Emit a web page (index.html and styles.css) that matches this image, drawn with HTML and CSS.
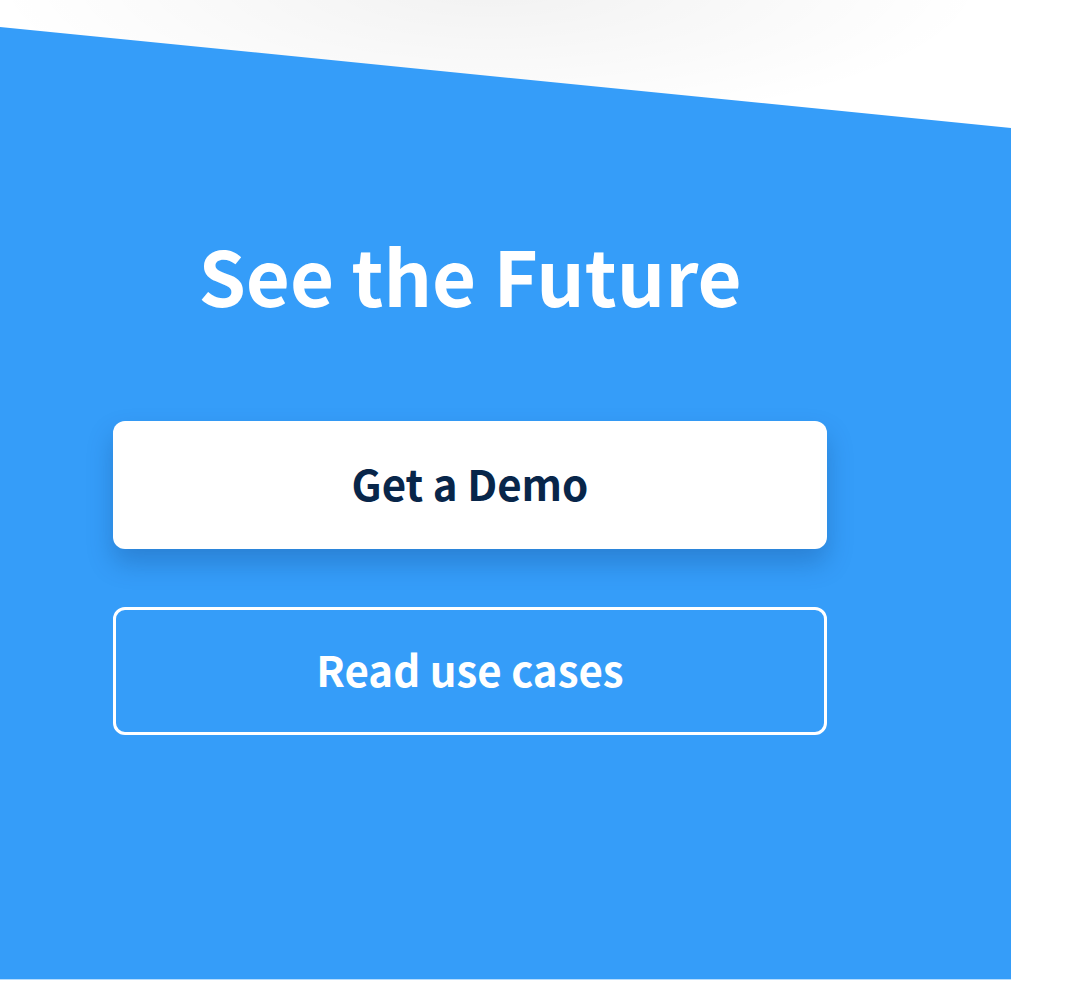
FILE: index.html
```html
<!DOCTYPE html>
<html lang="en">
<head>
<meta charset="utf-8">
<title>See the Future</title>
<link rel="stylesheet" href="styles.css">
</head>
<body>
<div class="page">
  <section class="cta">
    <div class="cta-inner">
      <h2 class="cta-title">See the Future</h2>
      <a class="btn btn-solid" href="#">Get a Demo</a>
      <a class="btn btn-outline" href="#">Read use cases</a>
    </div>
  </section>
</div>
</body>
</html>
```
FILE: styles.css
```css
html, body {
  margin: 0;
  padding: 0;
  background: #ffffff;
}
.page {
  width: 1080px;
  height: 984px;
  background:
    radial-gradient(ellipse 500px 150px at 490px -20px, rgba(0,0,0,0.055), rgba(0,0,0,0) 100%);
  font-family: "Noto Sans CJK SC", "Source Sans Pro", "Noto Sans", sans-serif;
}
.cta {
  width: 1011px;
  height: 980px;
  background: #359df9;
  clip-path: polygon(0 27px, 100% 128px, 100% 100%, 0 100%);
  border-bottom: 1px solid #b5dcfd;
  box-sizing: border-box;
}
.cta-inner {
  width: 714px;
  margin-left: 113px;
  padding-top: 219px;
  display: flex;
  flex-direction: column;
  align-items: stretch;
}
.cta-title {
  margin: 0 0 92px 0;
  text-align: center;
  color: #ffffff;
  font-size: 76px;
  font-weight: 700;
  line-height: 110px;
  letter-spacing: 0;
}
.btn {
  display: flex;
  align-items: center;
  justify-content: center;
  height: 128px;
  padding-bottom: 5px;
  box-sizing: border-box;
  border-radius: 12px;
  font-size: 42px;
  font-weight: 700;
  text-decoration: none;
}
.btn-solid {
  background: #ffffff;
  color: #08264a;
  box-shadow: 0 14px 26px rgba(10, 50, 110, 0.26);
}
.btn-outline {
  margin-top: 58px;
  border: 3px solid #ffffff;
  color: #ffffff;
  background: transparent;
}
```
